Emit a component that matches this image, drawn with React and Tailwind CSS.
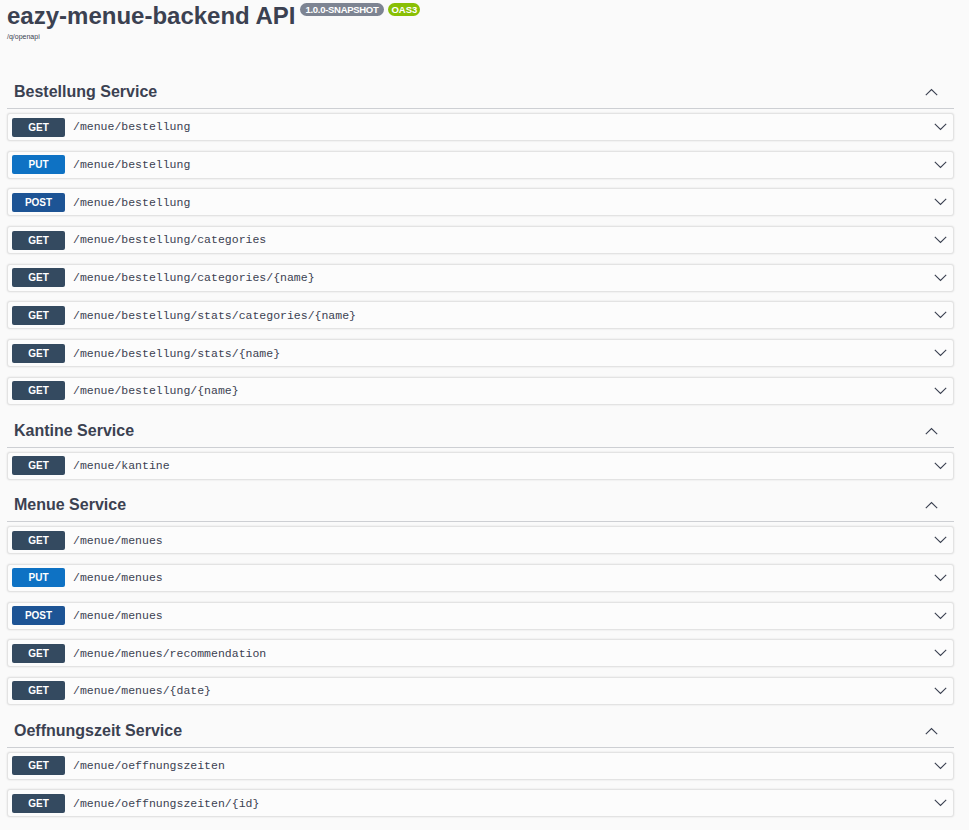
import { useState } from "react";

const sections = [
  {
    name: "Bestellung Service",
    ops: [
      ["GET", "/menue/bestellung"],
      ["PUT", "/menue/bestellung"],
      ["POST", "/menue/bestellung"],
      ["GET", "/menue/bestellung/categories"],
      ["GET", "/menue/bestellung/categories/{name}"],
      ["GET", "/menue/bestellung/stats/categories/{name}"],
      ["GET", "/menue/bestellung/stats/{name}"],
      ["GET", "/menue/bestellung/{name}"],
    ],
  },
  { name: "Kantine Service", ops: [["GET", "/menue/kantine"]] },
  {
    name: "Menue Service",
    ops: [
      ["GET", "/menue/menues"],
      ["PUT", "/menue/menues"],
      ["POST", "/menue/menues"],
      ["GET", "/menue/menues/recommendation"],
      ["GET", "/menue/menues/{date}"],
    ],
  },
  {
    name: "Oeffnungszeit Service",
    ops: [
      ["GET", "/menue/oeffnungszeiten"],
      ["GET", "/menue/oeffnungszeiten/{id}"],
    ],
  },
];

const methodColor = {
  GET: "bg-[#344a60]",
  PUT: "bg-[#0e72c4]",
  POST: "bg-[#1d5495]",
};

function Chevron({ up }) {
  return (
    <svg width="13" height="8" viewBox="0 0 13 8" fill="none" stroke="#3b4151" strokeWidth="1.1">
      {up ? <path d="M0.8 7.2 L6.5 1.5 L12.2 7.2" /> : <path d="M0.8 0.8 L6.5 6.5 L12.2 0.8" />}
    </svg>
  );
}

function Operation({ method, path }) {
  return (
    <div className="h-[28px] mb-[9.7px] flex items-center border border-[#e3e3e3] rounded-[3px] bg-[#fcfcfc] shadow-[0_0_2px_rgba(0,0,0,0.12)]">
      <div
        className={`ml-[4px] w-[53px] h-[19px] rounded-[2px] flex items-center justify-center text-white text-[10px] font-bold ${methodColor[method]}`}
      >
        {method}
      </div>
      <span className="ml-[8px] text-[11.5px] text-[#3b4151] font-['Liberation_Mono',monospace]">{path}</span>
      <span className="ml-auto mr-[6px] flex items-center">
        <Chevron />
      </span>
    </div>
  );
}

function Section({ name, ops }) {
  const [open, setOpen] = useState(true);
  return (
    <div>
      <div
        className="h-[33px] flex items-center border-b border-[#cdcfd3] cursor-pointer"
        onClick={() => setOpen(!open)}
      >
        <h3 className="pl-[7px] text-[16px] font-bold text-[#3b4151]">{name}</h3>
        <span className="ml-auto mr-[16px] flex items-center">
          <Chevron up={open} />
        </span>
      </div>
      {open && (
        <div className="pt-[4px]">
          {ops.map(([m, p], i) => (
            <Operation key={i} method={m} path={p} />
          ))}
        </div>
      )}
    </div>
  );
}

export default function App() {
  return (
    <div className="min-h-[830px] bg-[#fafafa] font-['Liberation_Sans',Arial,sans-serif]">
      <div className="w-[947px] ml-[7px]">
        <div className="flex items-start">
          <h1 className="text-[24px] font-bold text-[#3b4151] leading-[32px]">eazy-menue-backend API</h1>
          <span className="ml-[4px] mt-[3px] h-[13px] px-[6px] rounded-full bg-[#7d8492] text-white text-[9.5px] font-bold leading-[13px] tracking-[-0.3px]">
            1.0.0-SNAPSHOT
          </span>
          <span className="ml-[4px] mt-[3px] h-[13px] px-[3px] rounded-full bg-[#89bf04] text-white text-[9.5px] font-bold leading-[13px]">
            OAS3
          </span>
        </div>
        <div className="text-[7px] text-[#3b4151] leading-[10px]">/q/openapi</div>
        <div className="mt-[34px]">
          {sections.map((s) => (
            <Section key={s.name} name={s.name} ops={s.ops} />
          ))}
        </div>
      </div>
    </div>
  );
}
